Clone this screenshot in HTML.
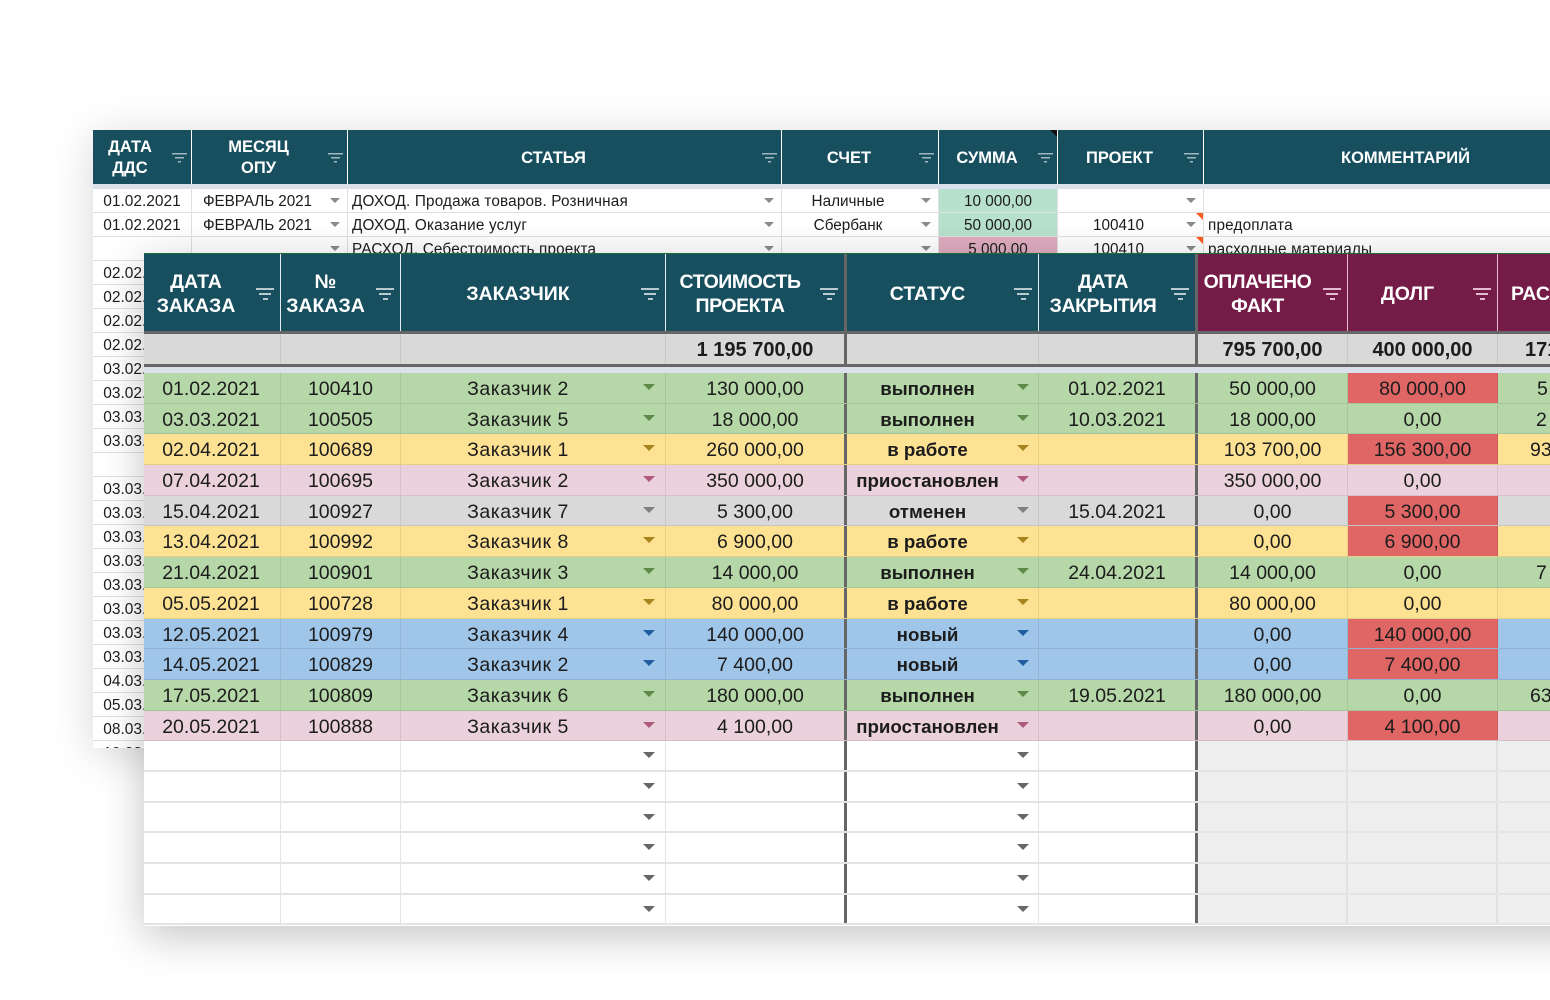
<!DOCTYPE html>
<html lang="ru"><head><meta charset="utf-8"><title>Таблица</title>
<style>
html,body{margin:0;padding:0;background:#fff}
body{width:1550px;height:1000px;overflow:hidden;position:relative;font-family:"Liberation Sans","Noto Sans CJK SC",sans-serif;color:#1c1c1c}
*{box-sizing:border-box}
#back{position:absolute;left:93px;top:130px;width:1600px;height:618px;background:#fff;box-shadow:0 6px 40px rgba(0,0,0,.16)}
#backclip{position:absolute;left:0;top:0;width:1600px;height:618px;overflow:hidden}
.bh{display:flex;height:54px;background:#174f5f;color:#fff;font-weight:bold;font-size:16.5px;line-height:21px;text-align:center}
.bh div{position:relative;flex:none;display:flex;align-items:center;justify-content:center;border-right:1px solid #fff;padding-right:22px;padding-top:3px}
.bh .w1{padding-right:24px;padding-top:1px}
.bh .w2{padding-top:1px}
.bh .w7{padding-right:20px}
.bh s{position:absolute;right:4px;top:23px;width:15px;height:10px;background:linear-gradient(#9fb8c0,#9fb8c0) 0 0/15px 1.5px no-repeat,linear-gradient(#9fb8c0,#9fb8c0) 3px 4px/9px 1.5px no-repeat,linear-gradient(#9fb8c0,#9fb8c0) 6px 8px/3px 1.5px no-repeat}
.bb{height:5px;background:#dbe1ea}
.br{display:flex;height:24px;line-height:25px;font-size:15.3px;border-bottom:1px solid #e0e0e0;white-space:nowrap}
.br div{position:relative;flex:none;border-right:1px solid #e0e0e0;text-align:center;overflow:hidden}
.br .w1{font-size:15.5px}
.w1{width:99px}.w2{width:156px;padding-right:24px}.w3{width:434px;padding-right:24px}.w4{width:157px;padding-right:24px}.w5{width:119px}.w6{width:146px;padding-right:24px}.w7{width:424px}
.br .w2{letter-spacing:-.1px}
.br .w3,.br .w7{text-align:left;padding-left:4px;letter-spacing:.17px}
.t::after{content:"";position:absolute;right:7px;top:9px;border-left:5px solid transparent;border-right:5px solid transparent;border-top:5px solid #8a8a8a}
.o::before{content:"";position:absolute;right:0;top:0;border-top:7px solid #ff5a1f;border-left:7px solid transparent}
#corner{position:absolute;left:957px;top:0;border-top:7px solid #111;border-right:0;border-left:7px solid transparent}
#front{position:absolute;left:144px;top:253px;width:1500px;height:673px;background:#fff;box-shadow:0 10px 40px rgba(0,0,0,.24)}
.fh{display:flex;height:78px;border-top:1px solid #1b6e3a;background:#174f5f;color:#fff;font-weight:bold;font-size:19.5px;line-height:24px;text-align:center}
.fh>div{position:relative;flex:none;display:flex;align-items:center;justify-content:center;padding-right:30px;border-right:1px solid #e6edf0;white-space:nowrap;padding-top:3px}
.fh .a{padding-right:32px}
.fh .d,.fh .f,.fh .g{letter-spacing:-.45px}
.fh s{position:absolute;right:6px;top:34px;width:18px;height:12px;background:linear-gradient(#b8c9cf,#b8c9cf) 0 0/18px 2px no-repeat,linear-gradient(#b8c9cf,#b8c9cf) 3px 5px/12px 2px no-repeat,linear-gradient(#b8c9cf,#b8c9cf) 6.5px 10px/5px 2px no-repeat}
.fh .m{background:#741b47;border-right-color:#e3bcd0}
.fh .m s{background:linear-gradient(#e3bcd0,#e3bcd0) 0 0/18px 2px no-repeat,linear-gradient(#e3bcd0,#e3bcd0) 3px 5px/12px 2px no-repeat,linear-gradient(#e3bcd0,#e3bcd0) 6.5px 10px/5px 2px no-repeat}
.a{width:137px}.b{width:120px}.c{width:265px}.d{width:178px}.e{width:195px}.f{width:156px}.g{width:153px}.h{width:150px}.i{width:200px}
.fh .d{border-right:0}.fh .e,.fh .g{border-left:3px solid #666}
.fh .e{padding-right:30px}
.fh .f{border-right:0;padding-right:28px}
.fl{height:3px;background:#666}
.tot{display:flex;height:30px;background:#d9d9d9;font-weight:bold;font-size:20px;line-height:32px;text-align:center;white-space:nowrap}
.tot div{flex:none;border-right:1px solid #c8c8c8;overflow:hidden}
.tot .d{border-right:0}.tot .f{border-right:0}.tot .e,.tot .g{border-left:3px solid #666}
.band{height:6px;background:#dbe1ea}
.r{display:flex;height:30.7px;line-height:33px;font-size:19.5px;text-align:center;white-space:nowrap;border-bottom:1px solid rgba(0,0,0,.09)}
.r div{position:relative;flex:none;border-right:1px solid rgba(0,0,0,.08)}
.r .a{padding-right:2px}
.r .d{border-right:0}.r .f{border-right:0}
.r .e,.r .g{border-left:3px solid #666}
.r .c{padding-right:30px;letter-spacing:.55px}.r .e{padding-right:30px;font-weight:bold;font-size:18.7px;line-height:31px}
.r .c::after,.r .e::after{content:"";position:absolute;top:11px;right:10px;border-left:6px solid transparent;border-right:6px solid transparent;border-top:6px solid #666}
.r .e::after{right:9px}
.r .i{text-align:left;border-right:0}
.x{background:#e06666}
.G{background:#b6d7a8}.Y{background:#fee294}.P{background:#ead1dc}.N{background:#d9d9d9}.U{background:#9fc5e8}
.G .c::after,.G .e::after{border-top-color:#5d8a4a}
.Y .c::after,.Y .e::after{border-top-color:#a8841c}
.P .c::after,.P .e::after{border-top-color:#ad5a80}
.N .c::after,.N .e::after{border-top-color:#808080}
.U .c::after,.U .e::after{border-top-color:#1f5f9f}
.W{background:#fff;border-bottom:2px solid #e4e4e4}
.W .a,.W .b,.W .c,.W .d,.W .e,.W .f{border-color:#e4e4e4}
.W .e,.W .g{border-left-color:#666}
.W .d,.W .f{border-right:0}
.W .g,.W .h,.W .i{background:#eee}
.W .g,.W .h{border-right:2px solid #e0e0e0}
</style></head><body>

<div id="back"><div id="backclip">
<div class="bh">
<div class="w1">ДАТА<br>ДДС<s></s></div>
<div class="w2">МЕСЯЦ<br>ОПУ<s></s></div>
<div class="w3">СТАТЬЯ<s></s></div>
<div class="w4">СЧЕТ<s></s></div>
<div class="w5">СУММА<s></s></div>
<div class="w6">ПРОЕКТ<s></s></div>
<div class="w7">КОММЕНТАРИЙ</div>
</div>
<div id="corner"></div>
<div class="bb"></div>
<div class="br"><div class="w1">01.02.2021</div><div class="w2 t">ФЕВРАЛЬ 2021</div><div class="w3 t">ДОХОД. Продажа товаров. Розничная</div><div class="w4 t">Наличные</div><div class="w5" style="background:#b7e1cd">10 000,00</div><div class="w6 t"></div><div class="w7"></div></div>
<div class="br"><div class="w1">01.02.2021</div><div class="w2 t">ФЕВРАЛЬ 2021</div><div class="w3 t">ДОХОД. Оказание услуг</div><div class="w4 t">Сбербанк</div><div class="w5" style="background:#b7e1cd">50 000,00</div><div class="w6 t o">100410</div><div class="w7">предоплата</div></div>
<div class="br"><div class="w1"></div><div class="w2 t"></div><div class="w3 t">РАСХОД. Себестоимость проекта</div><div class="w4 t"></div><div class="w5" style="background:#dfadc0">5 000,00</div><div class="w6 t o">100410</div><div class="w7">расходные материалы</div></div>
<div class="br"><div class="w1">02.02.2021</div></div>
<div class="br"><div class="w1">02.02.2021</div></div>
<div class="br"><div class="w1">02.02.2021</div></div>
<div class="br"><div class="w1">02.02.2021</div></div>
<div class="br"><div class="w1">03.02.2021</div></div>
<div class="br"><div class="w1">03.02.2021</div></div>
<div class="br"><div class="w1">03.03.2021</div></div>
<div class="br"><div class="w1">03.03.2021</div></div>
<div class="br"><div class="w1"></div></div>
<div class="br"><div class="w1">03.03.2021</div></div>
<div class="br"><div class="w1">03.03.2021</div></div>
<div class="br"><div class="w1">03.03.2021</div></div>
<div class="br"><div class="w1">03.03.2021</div></div>
<div class="br"><div class="w1">03.03.2021</div></div>
<div class="br"><div class="w1">03.03.2021</div></div>
<div class="br"><div class="w1">03.03.2021</div></div>
<div class="br"><div class="w1">03.03.2021</div></div>
<div class="br"><div class="w1">04.03.2021</div></div>
<div class="br"><div class="w1">05.03.2021</div></div>
<div class="br"><div class="w1">08.03.2021</div></div>
<div class="br"><div class="w1">10.03.2021</div></div>
</div></div>

<div id="front">
<div class="fh">
<div class="a">ДАТА<br>ЗАКАЗА<s></s></div>
<div class="b">№<br>ЗАКАЗА<s></s></div>
<div class="c">ЗАКАЗЧИК<s></s></div>
<div class="d">СТОИМОСТЬ<br>ПРОЕКТА<s></s></div>
<div class="e">СТАТУС<s></s></div>
<div class="f">ДАТА<br>ЗАКРЫТИЯ<s></s></div>
<div class="g m">ОПЛАЧЕНО<br>ФАКТ<s></s></div>
<div class="h m">ДОЛГ<s></s></div>
<div class="i m" style="justify-content:flex-start;padding-left:13px">РАСХОДЫ</div>
</div>
<div class="fl"></div>
<div class="tot"><div class="a"></div><div class="b"></div><div class="c"></div><div class="d">1 195 700,00</div><div class="e"></div><div class="f"></div><div class="g">795 700,00</div><div class="h">400 000,00</div><div class="i" style="text-align:left;padding-left:27px">171 000,00</div></div>
<div class="fl"></div>
<div class="band"></div>

<div class="r G"><div class="a">01.02.2021</div><div class="b">100410</div><div class="c">Заказчик 2</div><div class="d">130 000,00</div><div class="e">выполнен</div><div class="f">01.02.2021</div><div class="g">50 000,00</div><div class="h x">80 000,00</div><div class="i" style="padding-left:39px">5 000,00</div></div>
<div class="r G"><div class="a">03.03.2021</div><div class="b">100505</div><div class="c">Заказчик 5</div><div class="d">18 000,00</div><div class="e">выполнен</div><div class="f">10.03.2021</div><div class="g">18 000,00</div><div class="h">0,00</div><div class="i" style="padding-left:38px">2 000,00</div></div>
<div class="r Y"><div class="a">02.04.2021</div><div class="b">100689</div><div class="c">Заказчик 1</div><div class="d">260 000,00</div><div class="e">в работе</div><div class="f"></div><div class="g">103 700,00</div><div class="h x">156 300,00</div><div class="i" style="padding-left:32px">93 000,00</div></div>
<div class="r P"><div class="a">07.04.2021</div><div class="b">100695</div><div class="c">Заказчик 2</div><div class="d">350 000,00</div><div class="e">приостановлен</div><div class="f"></div><div class="g">350 000,00</div><div class="h">0,00</div><div class="i"></div></div>
<div class="r N"><div class="a">15.04.2021</div><div class="b">100927</div><div class="c">Заказчик 7</div><div class="d">5 300,00</div><div class="e">отменен</div><div class="f">15.04.2021</div><div class="g">0,00</div><div class="h x">5 300,00</div><div class="i"></div></div>
<div class="r Y"><div class="a">13.04.2021</div><div class="b">100992</div><div class="c">Заказчик 8</div><div class="d">6 900,00</div><div class="e">в работе</div><div class="f"></div><div class="g">0,00</div><div class="h x">6 900,00</div><div class="i"></div></div>
<div class="r G"><div class="a">21.04.2021</div><div class="b">100901</div><div class="c">Заказчик 3</div><div class="d">14 000,00</div><div class="e">выполнен</div><div class="f">24.04.2021</div><div class="g">14 000,00</div><div class="h">0,00</div><div class="i" style="padding-left:38px">7 000,00</div></div>
<div class="r Y"><div class="a">05.05.2021</div><div class="b">100728</div><div class="c">Заказчик 1</div><div class="d">80 000,00</div><div class="e">в работе</div><div class="f"></div><div class="g">80 000,00</div><div class="h">0,00</div><div class="i"></div></div>
<div class="r U"><div class="a">12.05.2021</div><div class="b">100979</div><div class="c">Заказчик 4</div><div class="d">140 000,00</div><div class="e">новый</div><div class="f"></div><div class="g">0,00</div><div class="h x">140 000,00</div><div class="i"></div></div>
<div class="r U"><div class="a">14.05.2021</div><div class="b">100829</div><div class="c">Заказчик 2</div><div class="d">7 400,00</div><div class="e">новый</div><div class="f"></div><div class="g">0,00</div><div class="h x">7 400,00</div><div class="i"></div></div>
<div class="r G"><div class="a">17.05.2021</div><div class="b">100809</div><div class="c">Заказчик 6</div><div class="d">180 000,00</div><div class="e">выполнен</div><div class="f">19.05.2021</div><div class="g">180 000,00</div><div class="h">0,00</div><div class="i" style="padding-left:32px">63 000,00</div></div>
<div class="r P"><div class="a">20.05.2021</div><div class="b">100888</div><div class="c">Заказчик 5</div><div class="d">4 100,00</div><div class="e">приостановлен</div><div class="f"></div><div class="g">0,00</div><div class="h x">4 100,00</div><div class="i"></div></div>

<div class="r W"><div class="a"></div><div class="b"></div><div class="c"></div><div class="d"></div><div class="e"></div><div class="f"></div><div class="g"></div><div class="h"></div><div class="i"></div></div>
<div class="r W"><div class="a"></div><div class="b"></div><div class="c"></div><div class="d"></div><div class="e"></div><div class="f"></div><div class="g"></div><div class="h"></div><div class="i"></div></div>
<div class="r W"><div class="a"></div><div class="b"></div><div class="c"></div><div class="d"></div><div class="e"></div><div class="f"></div><div class="g"></div><div class="h"></div><div class="i"></div></div>
<div class="r W"><div class="a"></div><div class="b"></div><div class="c"></div><div class="d"></div><div class="e"></div><div class="f"></div><div class="g"></div><div class="h"></div><div class="i"></div></div>
<div class="r W"><div class="a"></div><div class="b"></div><div class="c"></div><div class="d"></div><div class="e"></div><div class="f"></div><div class="g"></div><div class="h"></div><div class="i"></div></div>
<div class="r W"><div class="a"></div><div class="b"></div><div class="c"></div><div class="d"></div><div class="e"></div><div class="f"></div><div class="g"></div><div class="h"></div><div class="i"></div></div>
</div>
</body></html>
